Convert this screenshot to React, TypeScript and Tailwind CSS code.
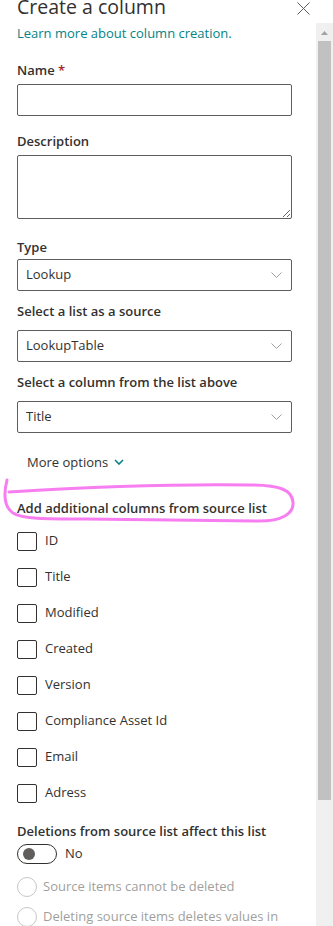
import { useState } from "react";

const font = { fontFamily: "'Open Sans', 'Liberation Sans', sans-serif" };

const extraColumns = [
  "ID",
  "Title",
  "Modified",
  "Created",
  "Version",
  "Compliance Asset Id",
  "Email",
  "Adress",
];

const Chevron = () => (
  <svg width="11" height="6" viewBox="0 0 11 6" fill="none">
    <path d="M0.5 0.5L5.5 5.5L10.5 0.5" stroke="#a19f9d" strokeWidth="1" />
  </svg>
);

type SelectProps = { value: string };
const FakeSelect = ({ value }: SelectProps) => (
  <div className="flex h-8 w-[275px] items-center justify-between rounded-[2px] border border-[#605e5c] pl-[8px] pr-[9px] text-[13px] text-[#323130]">
    <span>{value}</span>
    <Chevron />
  </div>
);

const Label = ({ children, className = "" }: { children: React.ReactNode; className?: string }) => (
  <label className={`block h-5 text-[13px] leading-5 font-semibold text-[#323130] ${className}`}>
    {children}
  </label>
);

const App = () => {
  const [checked, setChecked] = useState<Record<string, boolean>>({});

  return (
    <div
      className="relative flex h-[926px] w-[333px] flex-col overflow-hidden bg-white"
      style={font}
    >
      {/* panel header, partly scrolled off */}
      <header className="-mt-[7px] flex h-[30px] shrink-0 items-start justify-between pl-[17px] pr-[23px]">
        <h1 className="text-[19.5px] leading-7 font-medium text-[#323130]">Create a column</h1>
        <svg className="mt-[9px]" width="13" height="13" viewBox="0 0 13 13">
          <path d="M0.5 0.5L12.5 12.5M12.5 0.5L0.5 12.5" stroke="#605e5c" strokeWidth="1" />
        </svg>
      </header>

      <div className="flex min-h-0 flex-1">
        <main className="flex-1 pl-[17px]">
          <a className="block text-[13px] leading-5 text-[#038387]" href="#">
            Learn more about column creation.
          </a>

          <Label className="mt-[17px] mb-1">
            Name <span className="text-[#a4262c]">*</span>
          </Label>
          <input className="block h-8 w-[275px] rounded-[2px] border border-[#605e5c]" />

          <Label className="mt-[15px] mb-1">Description</Label>
          <textarea className="block h-16 w-[275px] resize-y rounded-[2px] border border-[#605e5c]" />

          <Label className="mt-[18px] mb-[2px]">Type</Label>
          <FakeSelect value="Lookup" />

          <Label className="mt-[10px] mb-[9px]">Select a list as a source</Label>
          <FakeSelect value="LookupTable" />

          <Label className="mt-[10px] mb-[9px]">Select a column from the list above</Label>
          <FakeSelect value="Title" />

          <button className="mt-[19px] ml-[10px] flex h-5 items-center gap-[6px] text-[13px] leading-5 text-[#323130]">
            More options
            <svg width="10" height="6" viewBox="0 0 10 6" fill="none">
              <path d="M1 1L5 5L9 1" stroke="#038387" strokeWidth="1.6" />
            </svg>
          </button>

          <Label className="mt-[26px]">Add additional columns from source list</Label>

          <ul className="mt-[5px] flex flex-col">
            {extraColumns.map((col) => (
              <li key={col} className="flex h-9 items-center">
                <button
                  className="flex items-center gap-[8px]"
                  onClick={() => setChecked((c) => ({ ...c, [col]: !c[col] }))}
                >
                  <span className="h-[19px] w-5 rounded-[2px] border border-[#323130]">
                    {checked[col] ? "✓" : null}
                  </span>
                  <span className="text-[13px] text-[#323130]">{col}</span>
                </button>
              </li>
            ))}
          </ul>

          <Label className="mt-[10px] mb-[3px]">Deletions from source list affect this list</Label>
          <div className="flex h-5 items-center gap-[8px]">
            <span className="flex h-5 w-10 items-center rounded-full border border-[#323130] pl-[5px]">
              <span className="h-3 w-3 rounded-full bg-[#605e5c]" />
            </span>
            <span className="text-[13px] text-[#323130]">No</span>
          </div>

          <div className="mt-[13px] flex flex-col gap-[10px]">
            {["Source items cannot be deleted", "Deleting source items deletes values in"].map((t) => (
              <div key={t} className="flex h-5 items-center gap-[6px]">
                <span className="h-5 w-5 shrink-0 rounded-full border border-[#c8c6c4]" />
                <span className="whitespace-nowrap text-[13px] text-[#a19f9d]">{t}</span>
              </div>
            ))}
          </div>
        </main>

        {/* scrollbar */}
        <div className="flex w-[17px] shrink-0 flex-col items-center bg-[#f0f0f0]">
          <svg className="mt-[8px]" width="7" height="4" viewBox="0 0 7 4">
            <path d="M0 4L3.5 0L7 4Z" fill="#a3a3a3" />
          </svg>
          <div className="mt-[6px] h-[759px] w-[13px] bg-[#c1c1c1]" />
        </div>
      </div>

      {/* pink hand-drawn annotation */}
      <svg className="pointer-events-none absolute top-0 left-0" width="333" height="926" fill="none">
        <path
          d="M7 480 C4 492, 3 506, 13 513 C22 519, 45 519, 85 519 L255 521 C283 522, 294 513, 293 502 C292 490, 280 485, 250 485 C180 484, 90 487, 9 492"
          stroke="#f77ef0"
          strokeWidth="3"
          strokeLinecap="round"
        />
      </svg>
    </div>
  );
};

export default App;
